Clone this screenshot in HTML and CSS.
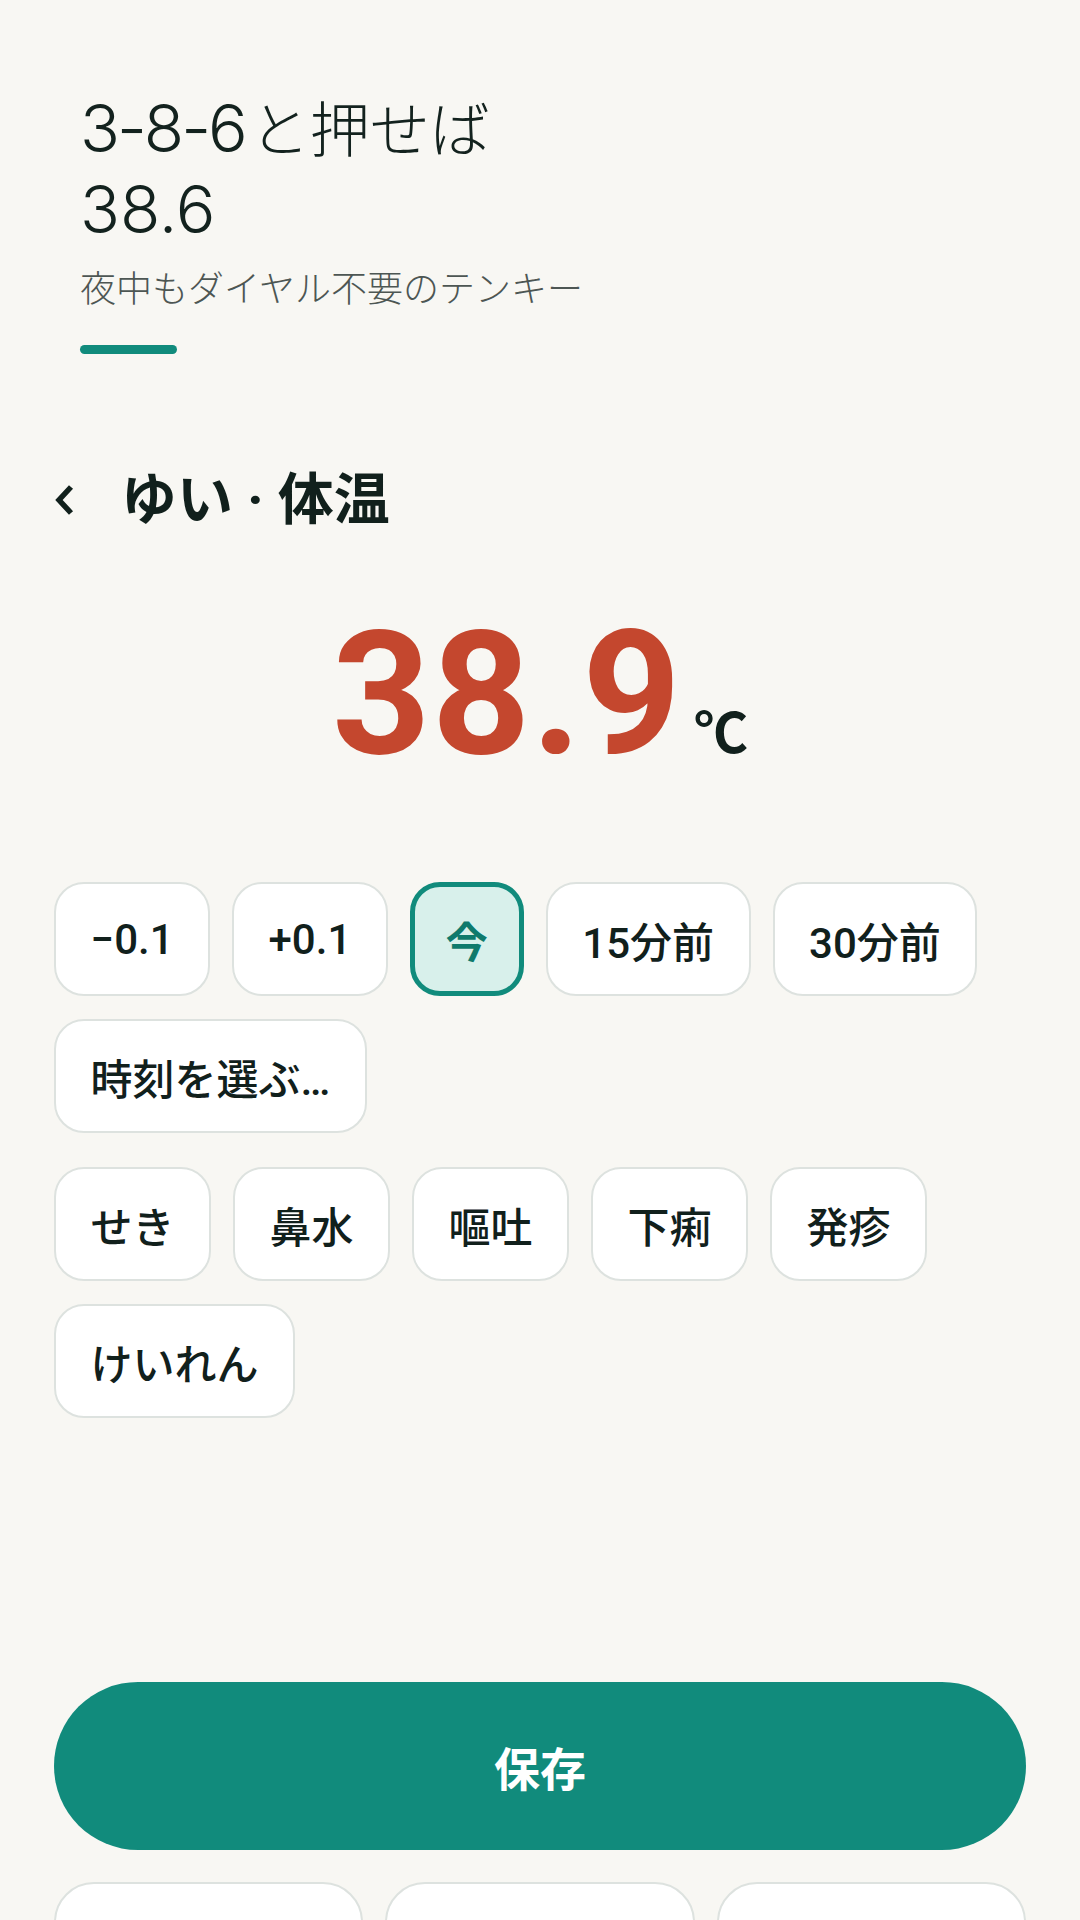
FILE: index.html
```html
<!DOCTYPE html>
<html lang="ja">
<head>
<meta charset="utf-8">
<title>体温</title>
<link rel="stylesheet" href="styles.css">
</head>
<body>
<div class="screen">
  <header class="hero">
    <h1 class="hero-title"><span class="line"><span class="hero-code">3-8-6</span><span class="hero-kana">と押せば</span></span><span class="line">38.6</span></h1>
    <p class="hero-sub">夜中もダイヤル不要のテンキー</p>
    <div class="hero-bar"></div>
  </header>

  <main class="panel">
    <div class="topbar">
      <button class="back" aria-label="戻る">
        <svg width="22" height="32" viewBox="0 0 22 32"><polyline points="16,3 4,16 16,29" fill="none" stroke="#11201c" stroke-width="5.5" stroke-linejoin="miter"/></svg>
      </button>
      <h2 class="topbar-title">ゆい · 体温</h2>
    </div>

    <div class="reading">
      <span class="value">38.9</span><span class="unit">℃</span>
    </div>

    <div class="chips">
      <button class="chip">−0.1</button>
      <button class="chip">+0.1</button>
      <button class="chip chip-selected">今</button>
      <button class="chip">15分前</button>
      <button class="chip">30分前</button>
      <button class="chip">時刻を選ぶ…</button>
    </div>

    <div class="chips chips-symptoms">
      <button class="chip">せき</button>
      <button class="chip">鼻水</button>
      <button class="chip">嘔吐</button>
      <button class="chip">下痢</button>
      <button class="chip">発疹</button>
      <button class="chip">けいれん</button>
    </div>

    <button class="save">保存</button>

    <div class="cards">
      <div class="card"></div>
      <div class="card"></div>
      <div class="card"></div>
    </div>
  </main>
</div>
</body>
</html>
```
FILE: styles.css
```css
* { box-sizing: border-box; }

html, body {
  margin: 0;
  padding: 0;
  background: #f8f7f3;
}

body {
  width: 1080px;
  height: 1920px;
  overflow: hidden;
  font-family: Roboto, "Noto Sans CJK JP", sans-serif;
  color: #11201c;
}

.screen {
  padding: 0 54px;
}

/* ---------- hero ---------- */
.hero {
  padding: 85px 26px 0;
}

.hero-title {
  margin: 0;
  font-family: Inter, "Noto Sans CJK JP", sans-serif;
  font-size: 66px;
  line-height: 81px;
  font-weight: 300;
  color: #13221e;
}

.hero-title .line {
  display: block;
}

.hero-code {
  letter-spacing: -3px;
}

.hero-kana {
  margin-left: 5px;
  font-family: "Noto Sans CJK JP", sans-serif;
  font-size: 60px;
}

.hero-sub {
  margin: 10px 0 0;
  font-family: "Noto Sans CJK JP", sans-serif;
  font-size: 36px;
  line-height: 53px;
  font-weight: 300;
  color: #4d5653;
}

.hero-bar {
  margin-top: 32px;
  width: 97px;
  height: 9px;
  border-radius: 5px;
  background: #118b7c;
}

/* ---------- panel ---------- */
.topbar {
  display: flex;
  align-items: center;
  margin-top: 110px;
  height: 72px;
}

.back {
  width: 67px;
  height: 72px;
  padding: 0 0 0 1px;
  border: 0;
  background: transparent;
  display: flex;
  align-items: center;
}

.topbar-title {
  margin: 0;
  font-family: Roboto, "Noto Sans CJK JP", sans-serif;
  font-size: 56px;
  line-height: 72px;
  font-weight: 700;
}

.reading {
  display: flex;
  justify-content: center;
  align-items: baseline;
  margin-top: 72px;
  height: 172px;
}

.value {
  font-size: 172px;
  line-height: 172px;
  font-weight: 700;
  color: #c4472e;
  letter-spacing: 1px;
}

.unit {
  margin-left: 12px;
  font-size: 54px;
  font-weight: 700;
  color: #11201c;
}

.chips {
  display: flex;
  flex-wrap: wrap;
  gap: 23px 22px;
  margin-top: 102px;
}

.chips-symptoms {
  margin-top: 34px;
}

.chip {
  height: 114px;
  padding: 0 34.5px;
  border: 2px solid #dde2df;
  border-radius: 30px;
  background: #ffffff;
  font-family: Roboto, "Noto Sans CJK JP", sans-serif;
  font-size: 42px;
  font-weight: 500;
  color: #11201c;
  display: inline-flex;
  align-items: center;
  justify-content: center;
}

.chip-selected {
  border: 5px solid #118b7c;
  background: #d8f0eb;
  color: #0f7a6c;
  padding: 0 31px;
  font-weight: 700;
}

.save {
  display: block;
  width: 100%;
  height: 168px;
  margin-top: 264px;
  border: 0;
  border-radius: 84px;
  background: #118b7c;
  color: #ffffff;
  font-family: "Noto Sans CJK JP", sans-serif;
  font-size: 46px;
  font-weight: 700;
}

.cards {
  display: grid;
  grid-template-columns: repeat(3, 1fr);
  gap: 22px;
  margin-top: 32px;
}

.card {
  height: 160px;
  border: 2px solid #dde2df;
  border-radius: 40px;
  background: #ffffff;
}
```
